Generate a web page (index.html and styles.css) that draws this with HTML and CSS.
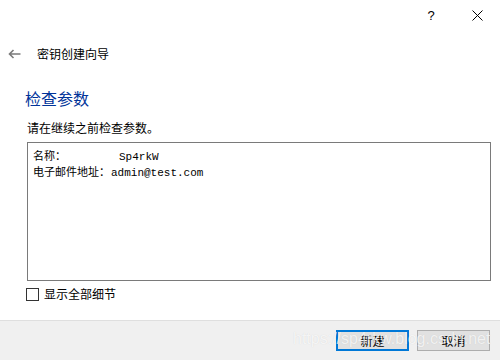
FILE: index.html
```html
<!DOCTYPE html>
<html lang="zh-CN">
<head>
    <meta charset="UTF-8">
    <title>密钥创建向导</title>
    <link rel="stylesheet" href="styles.css">
</head>
<body>
    <div id="dialog">
        <div class="titlebar">
            <span class="tb-btn">?</span>
            <span class="tb-btn">
                <svg width="11" height="11" viewBox="0 0 11 11"><path d="M0.5 0.5 L10.5 10.5 M10.5 0.5 L0.5 10.5" stroke="#000" stroke-width="1" fill="none"/></svg>
            </span>
        </div>
        <div class="nav">
            <svg class="back" width="13" height="10" viewBox="0 0 13 10"><path d="M12.5 5 H1.5 M5.5 1 L1.5 5 L5.5 9" stroke="#7a7a7a" stroke-width="1.6" fill="none"/></svg>
            <span class="nav-title">密钥创建向导</span>
        </div>
        <div class="main">
            <h1>检查参数</h1>
            <p class="hint">请在继续之前检查参数。</p>
            <div class="params">
                <div class="row"><span class="key key-short">名称：</span><span class="val">Sp4rkW</span></div>
                <div class="row"><span class="key key-long">电子邮件地址：</span><span class="val">admin@test.com</span></div>
            </div>
            <label class="check"><span class="box"></span>显示全部细节</label>
        </div>
        <div class="footer">
            <button class="btn btn-default">新建</button>
            <button class="btn">取消</button>
            <span class="watermark">https://sp4rkw.blog.csdn.net</span>
        </div>
    </div>
</body>
</html>
```
FILE: styles.css
```css
body {
    margin: 0;
    padding: 0;
    background: #FFFFFF;
    font-family: "Noto Sans CJK SC", "Liberation Sans", sans-serif;
    color: #000000;
}
#dialog {
    width: 500px;
    height: 360px;
    display: flex;
    flex-direction: column;
    overflow: hidden;
}
.titlebar {
    height: 30px;
    display: flex;
    justify-content: flex-end;
}
.tb-btn {
    width: 46px;
    height: 30px;
    display: flex;
    justify-content: center;
    align-items: center;
    font-family: "Liberation Sans", sans-serif;
    font-size: 13px;
}
.nav {
    height: 20px;
    margin-top: 14px;
    display: flex;
    align-items: center;
    padding-left: 8px;
}
.back {
    margin-right: 16px;
}
.nav-title {
    font-size: 12px;
    line-height: 20px;
}
.main {
    flex: 1;
    padding-left: 27px;
    padding-right: 10px;
}
h1 {
    margin: 24px 0 0 -2px;
    font-size: 16px;
    font-weight: normal;
    line-height: 20px;
    color: #003399;
}
.hint {
    margin: 12px 0 0 0;
    font-size: 12px;
    line-height: 16px;
}
.params {
    margin-top: 6px;
    width: 462px;
    height: 137px;
    border: 1px solid #7a7a7a;
    padding: 0 0 0 5px;
    box-sizing: content-box;
    width: 457px;
}
.row {
    display: flex;
    align-items: baseline;
    height: 16px;
    line-height: 16px;
}
.row:first-child {
    margin-top: 4px;
}
.key {
    font-size: 11px;
}
.key-short {
    width: 86px;
}
.key-long {
    width: 78px;
}
.val {
    font-family: "Liberation Mono", monospace;
    font-size: 11px;
}
.check {
    display: flex;
    align-items: center;
    margin-top: 5px;
    margin-left: -1px;
    font-size: 12px;
    line-height: 16px;
}
.check .box {
    width: 11px;
    height: 11px;
    border: 1px solid #333333;
    margin-right: 5px;
}
.footer {
    height: 40px;
    background: #F0F0F0;
    border-top: 1px solid #DFDFDF;
    display: flex;
    justify-content: flex-end;
    align-items: flex-start;
    padding: 9px 10px 0 0;
    box-sizing: border-box;
    gap: 8px;
    position: relative;
}
.btn {
    width: 73px;
    height: 21px;
    background: #E1E1E1;
    border: 1px solid #ADADAD;
    font-family: "Noto Sans CJK SC", sans-serif;
    font-size: 12px;
    padding: 0;
    color: #000000;
}
.btn-default {
    border: 2px solid #0078D7;
}
.watermark {
    position: absolute;
    left: 293px;
    top: 9px;
    font-family: "Liberation Sans", sans-serif;
    font-size: 16px;
    color: rgba(255, 255, 255, 0.75);
    text-shadow: 0 0 1px rgba(0, 0, 0, 0.12);
    pointer-events: none;
}
```
